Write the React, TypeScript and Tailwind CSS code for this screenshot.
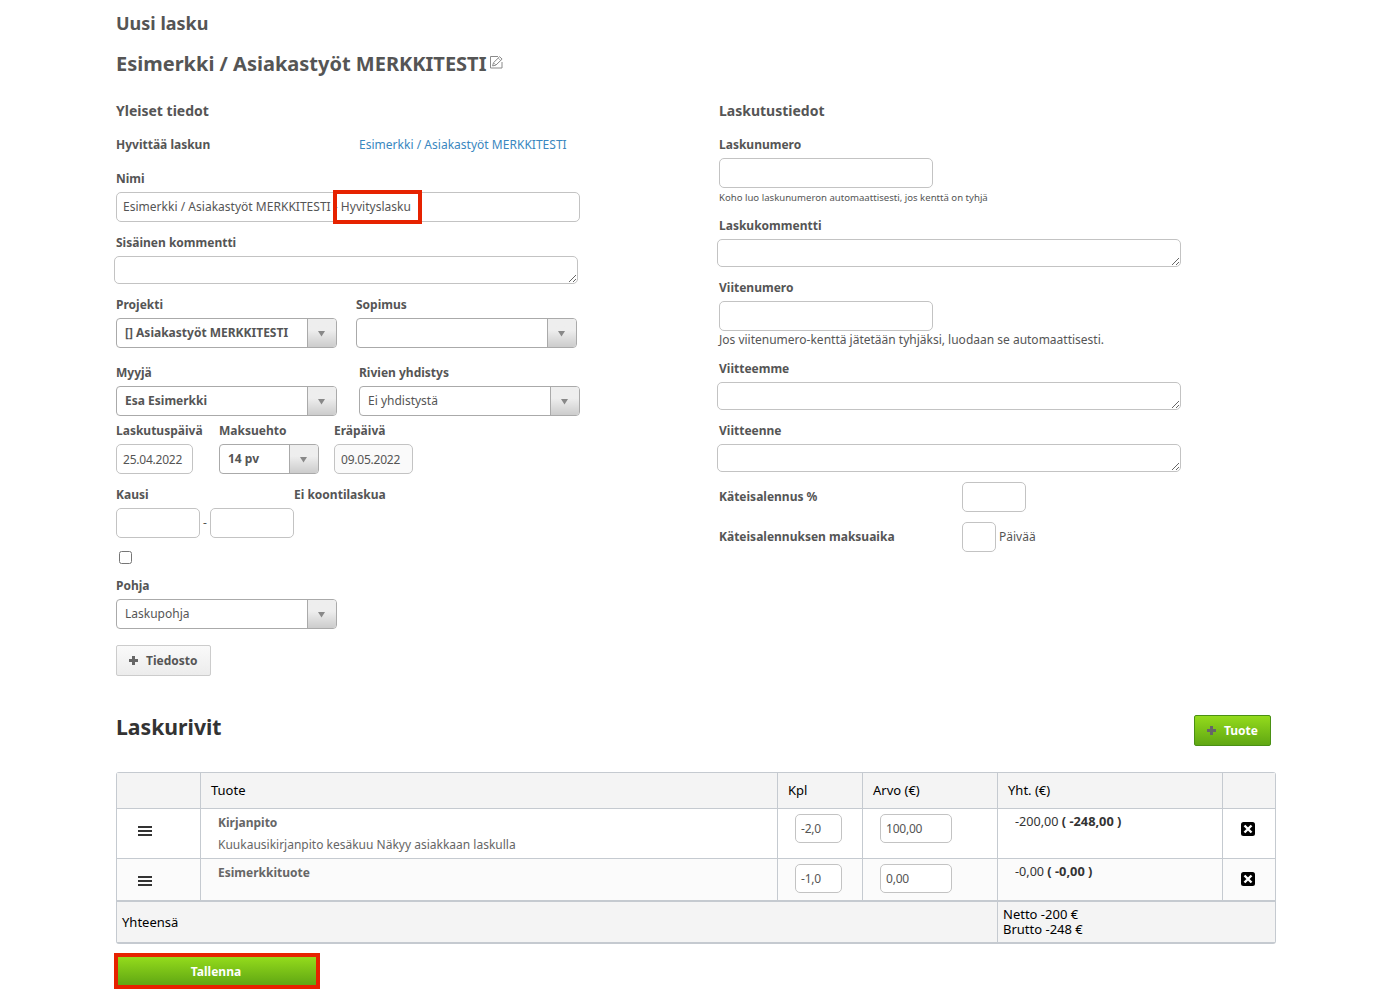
import React from 'react';
import { clsx } from 'clsx';
import { twMerge } from 'tailwind-merge';

type Row = {
  name: string;
  description?: string;
  count: string;
  price: string;
  net: string;
  gross: string;
};

const rows: Row[] = [
  { name: 'Kirjanpito', description: 'Kuukausikirjanpito kesäkuu Näkyy asiakkaan laskulla', count: '-2,0', price: '100,00', net: '-200,00', gross: '( -248,00 )' },
  { name: 'Esimerkkituote', count: '-1,0', price: '0,00', net: '-0,00', gross: '( -0,00 )' },
];

function Label({ children }: { children: React.ReactNode }) {
  return <label className="block h-[23px] whitespace-nowrap font-bold leading-5">{children}</label>;
}

function Field({ label, className, children }: { label: string; className?: string; children: React.ReactNode }) {
  return (
    <div className={className}>
      <Label>{label}</Label>
      {children}
    </div>
  );
}

function TextBox({ value, className }: { value?: string; className?: string }) {
  return (
    <div className={twMerge('flex h-[30px] items-center rounded-[5px] border border-[#c3c3c3] px-1.5', className)}>
      {value}
    </div>
  );
}

function TextArea() {
  return <textarea className="-ml-0.5 block h-7 w-[464px] resize rounded-[5px] border border-[#c3c3c3] bg-white" />;
}

function Select({ value, bold, className }: { value?: string; bold?: boolean; className?: string }) {
  return (
    <div className={clsx('flex h-[30px] overflow-hidden rounded-[4px] border border-[#aaa] bg-white', className)}>
      <div className={clsx('flex-1 whitespace-nowrap pl-2 leading-[27px]', bold && 'font-bold')}>{value}</div>
      <div className="flex w-[29px] items-center border-l border-[#aaa] bg-linear-to-b from-[#eee] from-40% to-[#ccc] pl-2.5">
        <svg width="7" height="6" viewBox="0 0 7 6" className="mt-0.5">
          <path d="M0 0h7L3.5 5.5z" fill="#888" />
        </svg>
      </div>
    </div>
  );
}

function PlusIcon() {
  return (
    <svg width="9" height="9" viewBox="0 0 9 9" fill="#666">
      <path d="M3 0h3v3h3v3H6v3H3V6H0V3h3z" />
    </svg>
  );
}

function EditIcon() {
  return (
    <svg width="13" height="13" viewBox="0 0 13 13" fill="none" stroke="#8a8a8a" className="mb-[3px] ml-1">
      <path d="M8 .5H.5v11.500h11.500V6" />
      <path d="M2.600 9.900l.9-3.200L9.600.7l2.500 2.400-6.200 6z" />
      <path d="M8.300 2.100l2.400 2.400M3.600 6.700l2.300 2.300" strokeWidth=".7" />
    </svg>
  );
}

function MenuIcon() {
  return (
    <svg width="14" height="10" viewBox="0 0 14 10" fill="#333">
      <path d="M0 0h14v2H0zM0 4h14v2H0zM0 8h14v2H0z" />
    </svg>
  );
}

function RemoveIcon() {
  return (
    <svg width="14" height="14" viewBox="0 0 14 14">
      <rect width="14" height="14" rx="2.500" fill="#000" />
      <path d="M3.500 3.500l7 7M10.500 3.500l-7 7" stroke="#fff" strokeWidth="2.400" />
    </svg>
  );
}

function GeneralInfo() {
  return (
    <section className="w-[603px]">
      <h3 className="text-sm font-bold leading-5">Yleiset tiedot</h3>
      <div className="mt-3.5 flex leading-5">
        <div className="w-[243px] font-bold">Hyvittää laskun</div>
        <a className="tracking-[0.02px] text-[#3a87c0]">Esimerkki / Asiakastyöt MERKKITESTI</a>
      </div>

      <Field label="Nimi" className="relative mt-3.5 w-[464px]">
        <TextBox value="Esimerkki / Asiakastyöt MERKKITESTI - Hyvityslasku" className="tracking-[0.02px]" />
        <div className="absolute left-[217px] top-[21px] h-[34px] w-[89px] border-4 border-[#e62200]" />
      </Field>

      <Field label="Sisäinen kommentti" className="mt-[11px]">
        <TextArea />
      </Field>

      <div className="mt-[11px] flex">
        <Field label="Projekti" className="w-60">
          <Select value="[] Asiakastyöt MERKKITESTI" bold className="w-[221px]" />
        </Field>
        <Field label="Sopimus">
          <Select className="w-[221px]" />
        </Field>
      </div>

      <div className="mt-[15px] flex">
        <Field label="Myyjä" className="w-[243px]">
          <Select value="Esa Esimerkki" bold className="w-[221px]" />
        </Field>
        <Field label="Rivien yhdistys">
          <Select value="Ei yhdistystä" className="w-[221px]" />
        </Field>
      </div>

      <div className="mt-[5px] flex">
        <Field label="Laskutuspäivä" className="w-[103px]">
          <TextBox value="25.04.2022" className="w-[77px] pt-0.5 tracking-[-0.22px]" />
        </Field>
        <Field label="Maksuehto" className="w-[115px]">
          <Select value="14 pv" bold className="w-[100px]" />
        </Field>
        <Field label="Eräpäivä">
          <TextBox value="09.05.2022" className="w-[79px] bg-[#fafafa] pt-0.5 tracking-[-0.22px]" />
        </Field>
      </div>

      <div className="mt-[11px] flex">
        <Field label="Kausi" className="w-[178px]">
          <div className="flex items-center justify-between">
            <TextBox className="w-[84px]" />
            <span>-</span>
            <TextBox className="w-[84px]" />
          </div>
        </Field>
        <Label>Ei koontilaskua</Label>
      </div>

      <input type="checkbox" className="ml-[3px] mt-[13px] block size-[13px]" />

      <Field label="Pohja" className="mt-3">
        <Select value="Laskupohja" className="w-[221px]" />
      </Field>

      <button className="mt-4 flex h-[31px] w-[95px] items-center gap-2 rounded-[2px] border border-[#ccc] bg-linear-to-b from-[#fafafa] to-[#ececec] pl-3 font-bold">
        <PlusIcon />
        Tiedosto
      </button>
    </section>
  );
}

function BillingInfo() {
  return (
    <section>
      <h3 className="text-sm font-bold leading-5">Laskutustiedot</h3>
      <Field label="Laskunumero" className="mt-3.5">
        <TextBox className="w-[214px]" />
      </Field>
      <p className="h-7 text-[9.6px] leading-[19px]">Koho luo laskunumeron automaattisesti, jos kenttä on tyhjä</p>
      <Field label="Laskukommentti">
        <TextArea />
      </Field>
      <Field label="Viitenumero" className="mt-[11px]">
        <TextBox className="w-[214px]" />
      </Field>
      <p className="h-7 leading-[18px]">Jos viitenumero-kenttä jätetään tyhjäksi, luodaan se automaattisesti.</p>
      <Field label="Viitteemme">
        <TextArea />
      </Field>
      <Field label="Viitteenne" className="mt-[11px]">
        <TextArea />
      </Field>
      <div className="mt-2.5 flex items-center">
        <div className="w-[243px] font-bold">Käteisalennus %</div>
        <TextBox className="w-16" />
      </div>
      <div className="mt-2.5 flex items-center">
        <div className="w-[243px] font-bold">Käteisalennuksen maksuaika</div>
        <TextBox className="w-[34px]" />
        <span className="ml-[3px]">Päivää</span>
      </div>
    </section>
  );
}

function InvoiceRows() {
  return (
    <div className="mt-[26px] w-[1160px] rounded-[3px] border border-b-2 border-[#c5cad0]">
      <div className="grid h-9 grid-cols-[84px_577px_85px_135px_225px_52px] divide-x divide-[#c5cad0] border-b border-[#c5cad0] bg-[#f4f4f4] text-[13px] leading-[35px] text-black">
        <div />
        <div className="pl-2.5">Tuote</div>
        <div className="pl-2.5">Kpl</div>
        <div className="pl-2.5">Arvo (€)</div>
        <div className="pl-2.5">Yht. (€)</div>
        <div />
      </div>

      {rows.map((row, i) => (
        <div
          key={row.name}
          className={clsx(
            'grid grid-cols-[84px_577px_85px_135px_225px_52px] divide-x divide-[#c5cad0] border-[#c5cad0]',
            i === 0 ? 'h-[50px] border-b' : 'h-[43px] border-b-2 bg-[#fbfbfb]'
          )}
        >
          <div className="pl-[21px] pt-[17px]"><MenuIcon /></div>
          <div className="pl-[17px] pt-[3px] leading-[22px] text-[#666]">
            <div className="font-bold">{row.name}</div>
            {row.description && <div>{row.description}</div>}
          </div>
          <div className="pl-[17px] pt-[5px]">
            <TextBox value={row.count} className="h-[29px] w-[47px] bg-white px-[5px] pt-px tracking-[-0.22px]" />
          </div>
          <div className="pl-[17px] pt-[5px]">
            <TextBox value={row.price} className="h-[29px] w-[72px] bg-white px-[5px] pt-px tracking-[-0.22px]" />
          </div>
          <div className="pl-[17px] pt-0.5 text-[12.6px] leading-5 text-[#333]">
            {row.net} <b className="text-[12.8px]">{row.gross}</b>
          </div>
          <div className="pl-[18px] pt-[13px]"><RemoveIcon /></div>
        </div>
      ))}

      <div className="grid h-10 grid-cols-[881px_277px] items-stretch divide-x divide-[#c5cad0] bg-[#f4f4f4] text-[13px] text-black">
        <div className="pl-[5px] leading-10">Yhteensä</div>
        <div className="pl-[5px] pt-[5px] leading-[15px]">
          Netto -200 €<br />
          Brutto -248 €
        </div>
      </div>
    </div>
  );
}

export default function App() {
  return (
    <main className="h-[1003px] overflow-hidden bg-white pl-[116px] font-['Noto_Sans',sans-serif] text-xs text-[#555]">
      <h1 className="pt-[11px] text-lg font-bold leading-6">Uusi lasku</h1>
      <h2 className="mt-[15px] flex h-7 items-center text-xl font-bold leading-7">
        Esimerkki / Asiakastyöt MERKKITESTI
        <EditIcon />
      </h2>

      <div className="mt-[23px] flex h-[575px]">
        <GeneralInfo />
        <BillingInfo />
      </div>

      <div className="mt-[39px] flex h-[31px] w-[1155px] items-center justify-between">
        <h2 className="mb-2 text-[21.2px] font-bold leading-8 text-[#333]">Laskurivit</h2>
        <button className="flex h-[31px] w-[77px] items-center gap-2 rounded-[2px] border border-[#4a9014] bg-linear-to-b from-[#94db1c] to-[#60a713] pl-3 font-bold text-white">
          <PlusIcon />
          Tuote
        </button>
      </div>

      <InvoiceRows />

      <button className="-ml-0.5 mt-[9px] block h-9 w-[206px] border-4 border-[#e62200] bg-linear-to-b from-[#94db1c] to-[#60a713] pr-0.5 pt-0.5 font-bold text-white">
        Tallenna
      </button>
    </main>
  );
}
